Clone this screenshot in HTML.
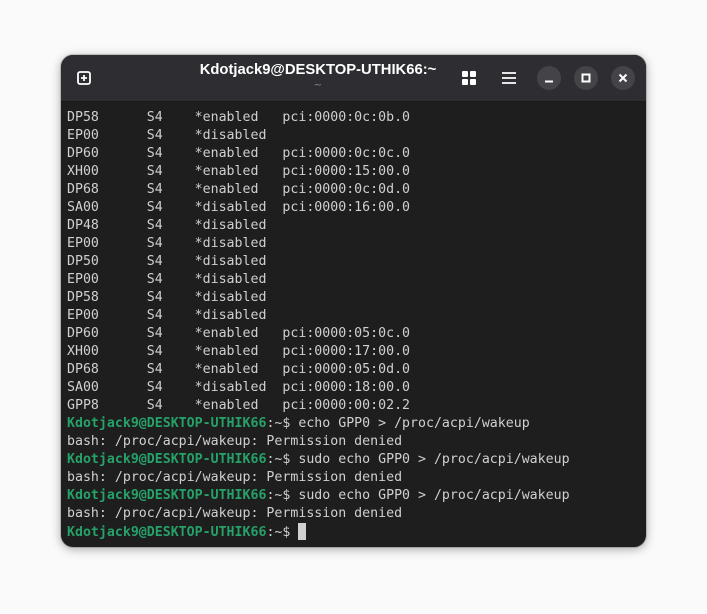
<!DOCTYPE html>
<html><head><meta charset="utf-8"><style>
html,body{margin:0;padding:0;width:707px;height:614px;background:#fafafa;overflow:hidden}
.win{position:absolute;left:61px;top:55px;width:585px;height:492px;border-radius:12px;background:#1e1e1e;overflow:hidden;box-shadow:0 2px 10px rgba(0,0,0,.35),0 0 0 1px rgba(0,0,0,.15)}
.hd{position:absolute;left:0;top:0;right:0;height:46px;background:#2e2e32;border-bottom:1px solid #1a1a1a}
.title{position:absolute;left:57px;width:400px;top:7px;text-align:center;color:#fff;font:bold 14.8px "Liberation Sans",sans-serif}
.sub{position:absolute;left:57px;width:400px;top:25px;text-align:center;color:#888;font:10px "DejaVu Sans",sans-serif}
.btn{position:absolute;top:11px;width:24px;height:24px;border-radius:50%;background:#444448}
pre{position:absolute;left:6px;top:54px;margin:0;font:13.25px/18px "DejaVu Sans Mono",monospace;color:#d0d0d0}
b{color:#26a269}
.cur{display:inline-block;width:8px;height:17px;background:#d0d0d0;vertical-align:-4px}
</style></head><body>
<div class="win">
<div class="hd">
<svg style="position:absolute;left:16px;top:16px" width="14" height="14" viewBox="0 0 14 14"><rect x="1" y="1" width="12" height="12" rx="2" fill="none" stroke="#fff" stroke-width="1.8"/><path d="M7 4v6M4 7h6" stroke="#fff" stroke-width="1.8"/></svg>
<div class="title">Kdotjack9@DESKTOP-UTHIK66:~</div>
<div class="sub">~</div>
<svg style="position:absolute;left:401px;top:16px" width="14" height="14"><rect x="0" y="0" width="6" height="6" rx="1" fill="#fff"/><rect x="8" y="0" width="6" height="6" rx="1" fill="#fff"/><rect x="0" y="8" width="6" height="6" rx="1" fill="#fff"/><rect x="8" y="8" width="6" height="6" rx="1" fill="#fff"/></svg>
<svg style="position:absolute;left:441px;top:17px" width="14" height="12"><path d="M0 1h14M0 6h14M0 11h14" stroke="#fff" stroke-width="1.8"/></svg>
<div class="btn" style="left:476px"><svg width="24" height="24"><path d="M8 15.5h8" stroke="#fff" stroke-width="2"/></svg></div>
<div class="btn" style="left:513px"><svg width="24" height="24"><rect x="8.5" y="8.5" width="7" height="7" fill="none" stroke="#fff" stroke-width="2"/></svg></div>
<div class="btn" style="left:550px"><svg width="24" height="24"><path d="M8.5 8.5l7 7M15.5 8.5l-7 7" stroke="#fff" stroke-width="2"/></svg></div>
</div>
<pre>DP58      S4    *enabled   pci:0000:0c:0b.0
EP00      S4    *disabled
DP60      S4    *enabled   pci:0000:0c:0c.0
XH00      S4    *enabled   pci:0000:15:00.0
DP68      S4    *enabled   pci:0000:0c:0d.0
SA00      S4    *disabled  pci:0000:16:00.0
DP48      S4    *disabled
EP00      S4    *disabled
DP50      S4    *disabled
EP00      S4    *disabled
DP58      S4    *disabled
EP00      S4    *disabled
DP60      S4    *enabled   pci:0000:05:0c.0
XH00      S4    *enabled   pci:0000:17:00.0
DP68      S4    *enabled   pci:0000:05:0d.0
SA00      S4    *disabled  pci:0000:18:00.0
GPP8      S4    *enabled   pci:0000:00:02.2
<b>Kdotjack9@DESKTOP-UTHIK66</b>:~$ echo GPP0 &gt; /proc/acpi/wakeup
bash: /proc/acpi/wakeup: Permission denied
<b>Kdotjack9@DESKTOP-UTHIK66</b>:~$ sudo echo GPP0 &gt; /proc/acpi/wakeup
bash: /proc/acpi/wakeup: Permission denied
<b>Kdotjack9@DESKTOP-UTHIK66</b>:~$ sudo echo GPP0 &gt; /proc/acpi/wakeup
bash: /proc/acpi/wakeup: Permission denied
<b>Kdotjack9@DESKTOP-UTHIK66</b>:~$ <span class="cur"></span></pre>
</div>
</body></html>
